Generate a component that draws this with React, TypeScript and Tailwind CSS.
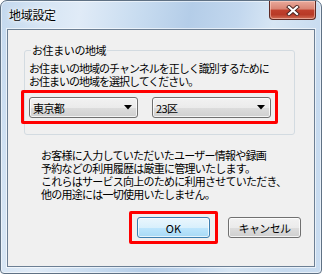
import React from "react";

function Arrow() {
  return (
    <svg width="8" height="5" viewBox="0 0 8 5" className="shrink-0">
      <polygon points="0,0 8,0 4,4.5" fill="#000" />
    </svg>
  );
}

function Dropdown({ label, width }: { label: string; width: string }) {
  return (
    <div
      className={`${width} h-[21px] shrink-0 rounded-[3px] border border-[#707070] bg-[linear-gradient(to_bottom,#f2f2f2_0%,#ebebeb_50%,#dddddd_51%,#cfcfcf_100%)] shadow-[inset_0_0_0_1px_rgba(255,255,255,0.75)] flex items-center justify-between pl-[3px] pr-[5px]`}
    >
      <span className="text-[11px] leading-[14px] tracking-[-0.6px] text-black">{label}</span>
      <Arrow />
    </div>
  );
}

export default function App() {
  return (
    <div className="w-[322px] h-[274px] bg-white font-['Noto_Sans_CJK_JP',sans-serif] text-black">
      <div className="w-full h-full rounded-t-[7px] rounded-b-[4px] border border-[#5f7184] bg-[linear-gradient(100deg,#c3d8ee_0%,#d6e5f4_12%,#e0ebf7_22%,#c8dcf0_38%,#b4cde8_52%,#c2d7ee_65%,#d7e6f4_75%,#c6daef_90%,#c9dcf0_100%)] shadow-[inset_0_0_0_1px_rgba(255,255,255,0.55)] flex flex-col">
        {/* Title bar */}
        <div className="h-[28px] shrink-0 flex items-start justify-between">
          <div className="pl-[8px] pt-[6px] text-[12px] leading-[16px] tracking-[-0.3px] [text-shadow:0_0_6px_#fff,0_0_3px_#fff]">
            地域設定
          </div>
          <div className="mr-[5px] w-[47px] h-[19px] rounded-b-[4px] border border-t-0 border-[#5e2a24] bg-[linear-gradient(to_bottom,#e9a99b_0%,#d98473_45%,#c0402d_50%,#b83a27_75%,#d06d55_100%)] shadow-[inset_0_0_0_1px_rgba(255,220,210,0.5)] flex items-center justify-center">
            <svg width="14" height="11" viewBox="0 0 14 11">
              <path d="M3 2 L11 9 M11 2 L3 9" stroke="#4a2420" strokeWidth="4" strokeLinecap="square" />
              <path d="M3 2 L11 9 M11 2 L3 9" stroke="#ffffff" strokeWidth="2.2" strokeLinecap="square" />
            </svg>
          </div>
        </div>

        {/* Client area */}
        <div className="mx-[6px] mb-[6px] flex-1 border border-[#6c7f94] bg-[#f0f0f0] shadow-[0_0_0_1px_rgba(255,255,255,0.6)] flex flex-col">
          <fieldset className="ml-[16px] mt-[13px] w-[271px] rounded-[3px] border border-[#d3dbe1] px-[4px] pb-[10px]">
            <legend className="ml-[2px] px-[1px] text-[11px] leading-[14px] tracking-[-0.4px]">
              お住まいの地域
            </legend>
            <div className="mt-[5px] text-[11px] leading-[13px] tracking-[-1px] whitespace-nowrap">
              <div>お住まいの地域のチャンネルを正しく識別するために</div>
              <div>お住まいの地域を選択してください。</div>
            </div>
            <div className="mt-[2px] -ml-[8px] w-[257px] rounded-[2px] border-[3px] border-[#ff0000] pl-[5px] pr-[4px] pt-[4px] pb-[3px] flex items-center gap-[14px]">
              <Dropdown label="東京都" width="w-[109px]" />
              <Dropdown label="23区" width="w-[119px]" />
            </div>
          </fieldset>

          <div className="ml-[33px] mt-[14px] text-[11px] leading-[13px] tracking-[-0.75px] whitespace-nowrap">
            <div>お客様に入力していただいたユーザー情報や録画</div>
            <div>予約などの利用履歴は厳重に管理いたします。</div>
            <div>これらはサービス向上のために利用させていただき、</div>
            <div>他の用途には一切使用いたしません。</div>
          </div>

          <div className="ml-[121px] mt-[10px] flex items-center gap-[10px]">
            <div className="rounded-[2px] border-[3px] border-[#ff0000] px-[5px] py-[3px]">
              <div className="w-[73px] h-[21px] rounded-[3px] border border-[#3c7fb1] bg-[linear-gradient(to_bottom,#eaf6fd_0%,#d9f0fc_50%,#bee6fd_51%,#a7d9f5_100%)] shadow-[inset_0_0_0_1px_rgba(255,255,255,0.7)] flex items-center justify-center text-[11px] leading-[14px]">
                OK
              </div>
            </div>
            <div className="w-[73px] h-[21px] rounded-[3px] border border-[#707070] bg-[linear-gradient(to_bottom,#f2f2f2_0%,#ebebeb_50%,#dddddd_51%,#cfcfcf_100%)] shadow-[inset_0_0_0_1px_rgba(255,255,255,0.75)] flex items-center justify-center text-[11px] leading-[14px] tracking-[-0.6px]">
              キャンセル
            </div>
          </div>
        </div>
      </div>
    </div>
  );
}
